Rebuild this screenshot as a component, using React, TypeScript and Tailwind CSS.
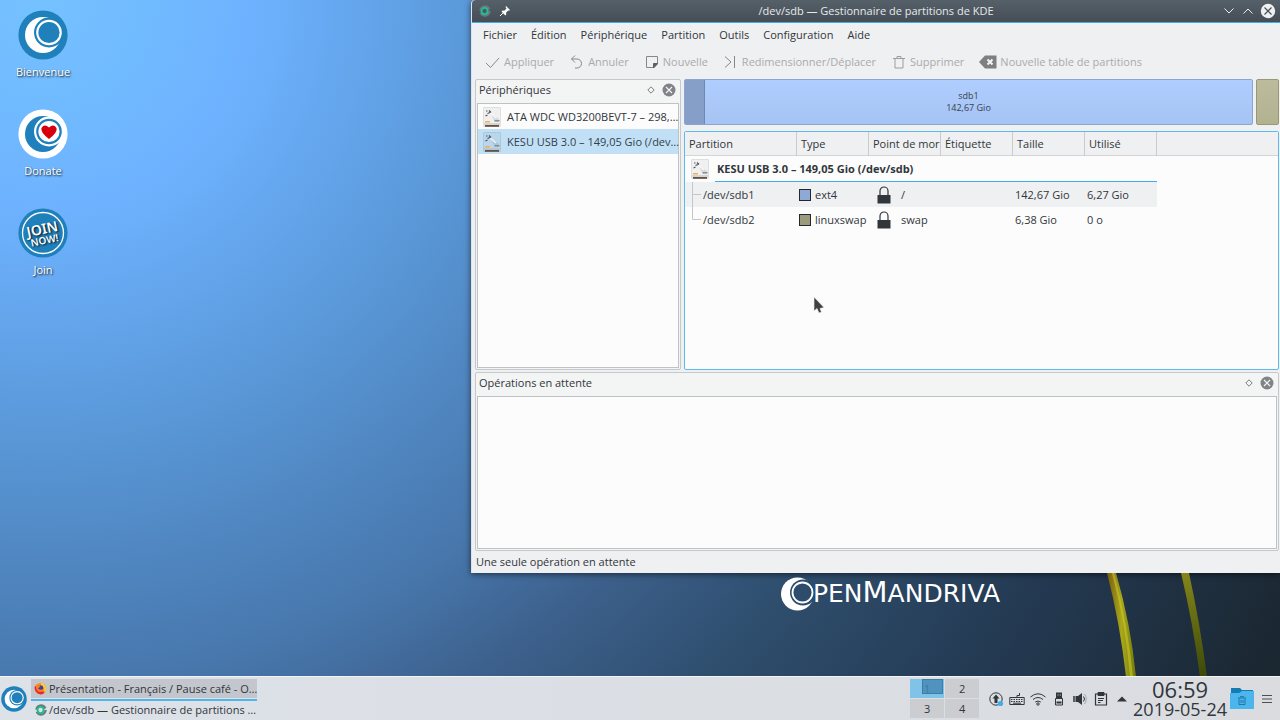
import type { ReactNode } from "react";

const menus = ["Fichier", "Édition", "Périphérique", "Partition", "Outils", "Configuration", "Aide"];

const devices = [
  { name: "ATA WDC WD3200BEVT-7 – 298,…", selected: false },
  { name: "KESU USB 3.0 – 149,05 Gio (/dev…", selected: true },
];

const columns = ["Partition", "Type", "Point de mor", "Étiquette", "Taille", "Utilisé"];

const partitions = [
  { path: "/dev/sdb1", type: "ext4", color: "bg-[#8ea9d6]", mount: "/", size: "142,67 Gio", used: "6,27 Gio" },
  { path: "/dev/sdb2", type: "linuxswap", color: "bg-[#9c9c7c]", mount: "swap", size: "6,38 Gio", used: "0 o" },
];

function Swirl({ bg, fg, children }: { bg: string; fg: string; children?: ReactNode }) {
  return (
    <svg viewBox="0 0 50 50" className="size-full" aria-hidden="true">
      <circle cx="25" cy="25" r="24.6" fill={bg} />
      <circle cx="25" cy="25" r="18" fill={fg} />
      <circle cx="31" cy="22.500" r="15" fill={bg} />
      <circle cx="31" cy="22.500" r="12.800" fill={fg} />
      <circle cx="31" cy="22.500" r="10.600" fill={bg} />
      {children}
    </svg>
  );
}

function JoinIcon() {
  return (
    <svg viewBox="0 0 50 50" className="size-full" aria-hidden="true">
      <circle cx="25" cy="25" r="24.600" fill="#1f80bb" />
      <circle cx="25" cy="25" r="20.500" fill="none" stroke="#fff" strokeWidth="1.300" />
      <g transform="rotate(-12 25 25)" fill="#fff" fontFamily="Noto Sans, sans-serif" fontWeight="600" textAnchor="middle">
        <text x="25" y="26" fontSize="14">JOIN</text>
        <text x="25" y="36" fontSize="10">NOW!</text>
      </g>
    </svg>
  );
}

function DriveIcon() {
  return (
    <svg viewBox="0 0 18 20" className="h-5 w-[18px] shrink-0" aria-hidden="true">
      <rect x="0.500" y="0.500" width="17" height="19" rx="0.500" fill="currentColor" fillOpacity="0.060" stroke="currentColor" strokeOpacity="0.120" />
      <path d="M7 6 16 12V15H12Z" fill="currentColor" fillOpacity="0.120" />
      <path d="M7 6 13 11" stroke="#fff" strokeWidth="1.500" opacity="0.800" />
      <path d="M3 4h1.500M6 3.500l2 2M4.500 6.500l2.500-1M2.500 9l2-1" stroke="#4c5156" strokeWidth="1.200" />
      <rect x="2" y="14" width="5" height="1.500" fill="#f4b04f" />
      <rect x="11.500" y="13" width="5" height="1.500" fill="#8b8f93" />
      <rect x="1" y="16.500" width="16" height="1" fill="#b4b8bb" />
      <rect x="2" y="18" width="14" height="1.800" fill="#66503f" />
    </svg>
  );
}

function LockIcon() {
  return (
    <svg viewBox="0 0 14 18" className="h-[18px] w-[14px] shrink-0" aria-hidden="true">
      <path d="M3 9V5a4 4 0 0 1 8 0v4" fill="none" stroke="#31363b" strokeWidth="1.200" />
      <rect x="0.500" y="9" width="13" height="8.500" fill="#31363b" />
    </svg>
  );
}

function AppIcon() {
  return (
    <svg viewBox="0 0 14 14" className="size-3 shrink-0" aria-hidden="true">
      <circle cx="7" cy="7" r="5.300" fill="none" stroke="#6d777e" strokeWidth="2.800" strokeDasharray="14 2.600" />
      <circle cx="6.500" cy="7" r="3.600" fill="none" stroke="#1fbf93" strokeWidth="2.200" />
    </svg>
  );
}

function DockHeader({ title }: { title: string }) {
  return (
    <div className="mb-1 flex h-[18px] shrink-0 items-center gap-[11px] pr-[3px] pl-[2px]">
      <h2 className="flex-1">{title}</h2>
      <button aria-label={`Détacher ${title}`}>
        <svg viewBox="0 0 8 8" className="size-2">
          <path d="M4 .8 7.200 4 4 7.200.8 4Z" fill="none" stroke="#7a7e81" />
        </svg>
      </button>
      <button aria-label={`Fermer ${title}`} className="-ml-1">
        <svg viewBox="0 0 14 14" className="size-[14px]">
          <circle cx="7" cy="7" r="6.500" fill="#808488" />
          <path d="M4 4l6 6M10 4l-6 6" stroke="#f3f4f4" strokeWidth="1.100" />
        </svg>
      </button>
    </div>
  );
}

function ToolButton({ label, wide, children }: { label: string; wide?: boolean; children: ReactNode }) {
  return (
    <button disabled className="flex items-center gap-[3px] px-[7px] text-[#a9abad]">
      <svg
        viewBox={wide ? "0 0 18 16" : "0 0 16 16"}
        className={wide ? "h-4 w-[18px]" : "size-4"}
        fill="none"
        stroke="#85888b"
        aria-hidden="true"
      >
        {children}
      </svg>
      {label}
    </button>
  );
}

function TitleBar() {
  return (
    <header className="flex h-[23px] shrink-0 items-center rounded-tl-sm border-b border-[#3daee9] bg-linear-to-b from-[#566069] to-[#454e56] text-[#e6e9eb]">
      <div className="flex w-14 items-center gap-2 pl-[7px]">
        <AppIcon />
        <svg viewBox="0 0 12 12" className="size-3" aria-hidden="true">
          <path d="M7 1l4 4-1 .7-.8-.3-2.200 2.300.3 1.800-1 1L2.500 6.500l1-1 1.800.3 2.200-2.200L6.500 2Z" fill="#fff" />
          <path d="M4.500 7.500 1 11" stroke="#fff" />
        </svg>
      </div>
      <h1 className="flex-1 text-center">/dev/sdb — Gestionnaire de partitions de KDE</h1>
      <div className="flex w-14 items-center justify-end gap-[9px] pr-1">
        <button aria-label="Réduire">
          <svg viewBox="0 0 10 6" className="h-[6px] w-[10px]"><path d="M.5.5 5 5 9.500.5" fill="none" stroke="#eff0f1" /></svg>
        </button>
        <button aria-label="Agrandir">
          <svg viewBox="0 0 10 6" className="h-[6px] w-[10px]"><path d="M.5 5.500 5 1 9.500 5.500" fill="none" stroke="#eff0f1" /></svg>
        </button>
        <button aria-label="Fermer" className="-ml-[2px]">
          <svg viewBox="0 0 16 16" className="size-4">
            <circle cx="8" cy="8" r="7.200" fill="#eff0f1" />
            <path d="M4.500 4.500l7 7M11.500 4.500l-7 7" stroke="#475057" strokeWidth="1.200" />
          </svg>
        </button>
      </div>
    </header>
  );
}

function Toolbar() {
  return (
    <div className="flex h-[29px] shrink-0 items-center gap-px pl-[6px] whitespace-nowrap" role="toolbar">
      <ToolButton label="Appliquer"><path d="M1 9l4.500 4.500L14 4" /></ToolButton>
      <ToolButton label="Annuler"><path d="M2.500 5H8a4.500 4.500 0 0 1 0 9H6M6 1.500 2.500 5 6 8.500" /></ToolButton>
      <ToolButton label="Nouvelle">
        <path d="M2.500 2.500h11v7.500l-3.500 3.500H2.500Z" />
        <path d="M13.500 9.500H9.500V14Z" fill="#5c6063" stroke="#5c6063" />
      </ToolButton>
      <ToolButton label="Redimensionner/Déplacer"><path d="M2 2.500 8 8l-6 5.500M11.500 2v12" /></ToolButton>
      <ToolButton label="Supprimer"><path d="M2 4.500h12M6 4V2.500h4V4M4 4.500v9.500h8V4.500" stroke="#9b9d9f" /></ToolButton>
      <ToolButton label="Nouvelle table de partitions" wide>
        <path d="M0 8l6-6.500h11.500v13H6Z" fill="#7d7f81" stroke="none" />
        <path d="M8.500 5.500l5 5M13.500 5.500l-5 5" stroke="#f5f5f5" strokeWidth="2" />
      </ToolButton>
    </div>
  );
}

function DevicesDock() {
  return (
    <section className="flex w-[206px] shrink-0 flex-col rounded-xs border border-[#c6c9cb] bg-[#f3f4f4] p-px">
      <DockHeader title="Périphériques" />
      <ul className="flex-1 border border-[#bfc2c4] bg-[#fcfcfc]">
        {devices.map((d) => (
          <li
            key={d.name}
            className={`flex h-[25px] items-center gap-[6px] pl-[5px] whitespace-nowrap ${d.selected ? "bg-[#c2e0f5] text-[#31404f]" : ""}`}
          >
            <DriveIcon />
            {d.name}
          </li>
        ))}
      </ul>
    </section>
  );
}

function PartitionBar() {
  return (
    <div className="flex h-[46px] shrink-0 gap-[3px]">
      <div className="flex flex-1 rounded-xs border border-[#8ba5d0] bg-linear-to-b from-[#b0cdff] to-[#a5c3f3]">
        <div className="w-5 border-r border-[#7088b0] bg-[#869fc9]" />
        <div className="-ml-5 flex flex-1 flex-col items-center justify-center text-[9px] leading-3 text-[#35404e]">
          <span>sdb1</span>
          <span>142,67 Gio</span>
        </div>
      </div>
      <div className="w-[23px] rounded-xs border border-[#97977a] bg-linear-to-b from-[#bcbc9d] to-[#b2b291]" />
    </div>
  );
}

function PartitionTable() {
  return (
    <div className="relative mt-[6px] min-h-0 flex-1 rounded-xs border border-[#5fb9ea] bg-[#fcfcfc]">
      <div className="h-6 border-b border-[#d3d5d6] bg-[#eff0f1]" />
      <table className="-mt-6 w-[472px] table-fixed border-separate border-spacing-0 text-left whitespace-nowrap">
        <colgroup>
          <col className="w-[112px]" />
          <col span={5} className="w-[72px]" />
        </colgroup>
        <thead>
          <tr className="h-6">
            {columns.map((c) => (
              <th key={c} scope="col" className="border-r border-[#c9cbcd] p-0 pl-1 font-normal">{c}</th>
            ))}
          </tr>
        </thead>
        <tbody>
          <tr className="h-[26px]">
            <th scope="rowgroup" colSpan={6} className="p-0 pl-[6px]">
              <div className="flex h-[26px]">
                <div className="flex w-6 items-center"><DriveIcon /></div>
                <div className="flex flex-1 flex-col font-bold">
                  <span className="flex flex-1 items-center pl-[2px]">KESU USB 3.0 – 149,05 Gio (/dev/sdb)</span>
                  <span className="h-px bg-[#3daee9]" />
                </div>
              </div>
            </th>
          </tr>
          {partitions.map((p, i) => (
            <tr key={p.path} className={`h-[25px] ${i === 0 ? "bg-[#eff0f1]" : ""}`}>
              <td className="p-0">
                <div className="flex h-[25px] items-center gap-[2px] pl-[7px]">
                  <svg viewBox="0 0 9 25" className="h-[25px] w-[9px]" aria-hidden="true">
                    <path d={i === 0 ? "M.5 0V25M.5 12.500H9" : "M.5 0V12.500H9"} fill="none" stroke="#c4c6c8" />
                  </svg>
                  {p.path}
                </div>
              </td>
              <td className="p-0">
                <div className="flex items-center gap-1 pl-[2px]">
                  <span className={`size-3 border border-[#23282d] ${p.color}`} />
                  {p.type}
                </div>
              </td>
              <td className="p-0">
                <div className="flex items-center gap-[10px] pl-2"><LockIcon />{p.mount}</div>
              </td>
              <td className="p-0" />
              <td className="p-0 pl-[2px]">{p.size}</td>
              <td className="p-0 pl-[2px]">{p.used}</td>
            </tr>
          ))}
        </tbody>
      </table>
      <svg viewBox="0 0 12 18" className="absolute top-[164px] left-32 h-[18px] w-3" aria-hidden="true">
        <path d="M1 1v14l3-2.500 2 4.500 2.500-1-1.500-3.500 4-1Z" fill="#3f4245" stroke="#f4f4f4" strokeWidth="0.600" />
      </svg>
    </div>
  );
}

function PartitionManager() {
  return (
    <div className="flex min-h-0 flex-1 flex-col rounded-tl-sm border-l border-[#dfe3e6] bg-[#eff0f1] shadow-[0_1px_6px_rgba(0,0,0,0.6)]">
      <TitleBar />
      <nav className="flex h-6 shrink-0 items-center pl-1">
        {menus.map((m) => (
          <button key={m} className="px-[7px]">{m}</button>
        ))}
      </nav>
      <Toolbar />
      <main className="flex min-h-0 flex-1 flex-col gap-[2px] pt-[3px] pr-px pl-[3px]">
        <div className="flex min-h-0 flex-[291] gap-[3px]">
          <DevicesDock />
          <div className="flex min-w-0 flex-1 flex-col">
            <PartitionBar />
            <PartitionTable />
          </div>
        </div>
        <section className="flex min-h-0 flex-[175] flex-col rounded-xs border border-[#c6c9cb] bg-[#f3f4f4] p-px">
          <DockHeader title="Opérations en attente" />
          <div className="flex-1 border border-[#bfc2c4] bg-[#fcfcfc]" />
        </section>
      </main>
      <footer className="flex h-[22px] shrink-0 items-center pl-1">Une seule opération en attente</footer>
    </div>
  );
}

function DesktopIcon({ label, children }: { label: string; children: ReactNode }) {
  return (
    <a
      href="#"
      className="flex h-[99px] w-[86px] flex-col items-center gap-1 text-white [text-shadow:1px_1px_2px_rgba(0,0,0,0.9)]"
    >
      <span className="size-[50px]">{children}</span>
      {label}
    </a>
  );
}

function WallpaperFoot() {
  return (
    <div className="flex h-[103px] shrink-0 items-start justify-between overflow-hidden pl-[309px]">
      <svg viewBox="0 0 236 40" className="h-10 w-[236px]" fill="#fff" fontFamily="DejaVu Sans, sans-serif">
        <mask id="crescent">
          <rect width="40" height="40" fill="#fff" />
          <circle cx="23" cy="19.500" r="13" fill="#000" />
        </mask>
        <circle cx="17.500" cy="21" r="16.500" mask="url(#crescent)" />
        <circle cx="22.500" cy="19.500" r="10" fill="none" stroke="#fff" strokeWidth="1.800" />
        <text x="33" y="29" fontSize="25">
          PEN<tspan fontSize="29">M</tspan>ANDRIVA
        </text>
      </svg>
      <svg viewBox="0 0 180 104" className="h-[104px] w-[180px] shrink-0" aria-hidden="true">
        <defs>
          <linearGradient id="stalk" x1="0" x2="1">
            <stop offset="0" stopColor="#7a5a10" />
            <stop offset="0.500" stopColor="#a9a81a" />
            <stop offset="1" stopColor="#747a0c" />
          </linearGradient>
          <linearGradient id="stalk-dark" x1="0" x2="0" y1="0" y2="1">
            <stop offset="0" stopColor="#85851a" />
            <stop offset="1" stopColor="#3c4a08" />
          </linearGradient>
        </defs>
        <path d="M7 0h9q15 52 20 104H26Q20 50 7 0Z" fill="url(#stalk)" />
        <path d="M12 0h2q14 52 19 104h-3Q26 52 12 0Z" fill="#c8c62c" opacity="0.600" />
        <path d="M81 0h8q11 50 18 104h-7Q93 50 81 0Z" fill="url(#stalk-dark)" />
      </svg>
    </div>
  );
}

function Taskbar() {
  return (
    <footer className="flex h-11 shrink-0 items-center border-t border-[#f2f4f6] bg-linear-to-r from-[#dde2e9] to-[#dadce0] pt-px">
      <button aria-label="Menu des applications" className="ml-px size-[26px] shrink-0">
        <Swirl bg="#1f80bb" fg="#fff" />
      </button>
      <div className="ml-1 flex w-[226px] flex-col self-start pt-px">
        <button className="flex h-[19px] items-center gap-[2px] bg-[#c3c7cd] pl-[3px] whitespace-nowrap">
          <svg viewBox="0 0 14 14" className="size-[13px] shrink-0" aria-hidden="true">
            <circle cx="7" cy="7.200" r="6.300" fill="#ff9418" />
            <path d="M1 4Q-.5 9 4 12.500 9 15 12 10.500L6 10Z" fill="#e5283f" />
            <path d="M8 .5q6 3 5 8.500-1 2-2 2.500 1-6-4-8Z" fill="#ffcb35" />
            <circle cx="7" cy="6.500" r="3" fill="#3b3fa5" />
            <path d="M2 4q2-2 5 .5L4.500 7Q7 9.500 10 7.500q-1 4-5 3Q2 8.500 2 4Z" fill="#ff7a22" />
          </svg>
          <span>Présentation - Français / Pause café - O…</span>
        </button>
        <div className="mt-px h-[2px] bg-[#53b4ea]" />
        <button className="flex h-[18px] items-center gap-[2px] pl-[3px] whitespace-nowrap">
          <span className="flex w-[13px] justify-center"><AppIcon /></span>
          <span>/dev/sdb — Gestionnaire de partitions …</span>
        </button>
      </div>
      <div className="ml-auto grid grid-cols-2 gap-px self-start pt-px">
        <button aria-label="Bureau 1" className="relative h-[19px] w-[34px] bg-[#7fc3e9] text-[#3a7ba5]">
          <span className="absolute top-0 right-px h-[15px] w-[21px] border border-[#3d7da6] bg-[#4f93be]" />
          <span className="relative">1</span>
        </button>
        <button className="h-[19px] w-[34px] bg-[#cbcdd1]">2</button>
        <button className="h-[19px] w-[34px] bg-[#cbcdd1]">3</button>
        <button className="h-[19px] w-[34px] bg-[#cbcdd1]">4</button>
      </div>
      <div className="ml-[9px] flex items-center gap-[5px]">
        <svg viewBox="0 0 16 16" className="size-4" aria-label="Mises à jour">
          <circle cx="8" cy="8" r="6.200" fill="none" stroke="#31363b" />
          <path d="M8 3.500 11.500 7.500H9.500V12h-3V7.500h-2Z" fill="#31363b" />
          <circle cx="12.500" cy="12.500" r="2.600" fill="#3daee9" />
        </svg>
        <svg viewBox="0 0 16 16" className="size-4" fill="none" stroke="#31363b" aria-label="Clavier">
          <path d="M8 6V4.500h2.500V2M.8 6.500h14.400v7H.8Z" />
          <path d="M2 8.500h12M2 10.500h12" strokeDasharray="1.500 1" strokeWidth="1.200" />
          <path d="M4 12.200h8" />
        </svg>
        <svg viewBox="0 0 16 16" className="size-4" fill="none" stroke="#31363b" aria-label="Réseau">
          <path d="M.5 6Q8-.5 15.500 6M3 8.500q5-4 10 0M5.200 11q2.800-2 5.600 0" />
          <circle cx="8" cy="13" r="1.200" />
        </svg>
        <svg viewBox="0 0 16 16" className="size-4" aria-label="Périphérique USB">
          <path d="M5 1.500h6V7H5Z" fill="#31363b" />
          <path d="M6.500 3.500h1v1h-1ZM8.800 3.500h1v1h-1Z" fill="#dadce0" />
          <path d="M4.500 7.500h7v6.500h-7Z" fill="none" stroke="#31363b" />
          <path d="M5.500 11.500h5" stroke="#31363b" strokeWidth="2" />
        </svg>
        <svg viewBox="0 0 16 16" className="size-4" aria-label="Volume">
          <path d="M2 5v6" stroke="#31363b" strokeWidth="1.500" />
          <path d="M3.500 5H6l4-3v12l-4-3H3.500Z" fill="#31363b" />
          <path d="M11.500 5.500q2 2.500 0 5" fill="none" stroke="#31363b" />
          <path d="M12.500 3q3.500 5 0 10" fill="none" stroke="#a4a8ab" />
        </svg>
        <svg viewBox="0 0 16 16" className="size-4" fill="none" stroke="#31363b" aria-label="Presse-papiers">
          <path d="M2.500 3h11v11h-11Z" strokeWidth="1.200" />
          <path d="M5 1.500h6v3H5Z" fill="#31363b" />
          <path d="M5 7.500h6M5 9.500h5M5 11.500h2.500" />
        </svg>
        <button aria-label="Afficher les icônes cachées">
          <svg viewBox="0 0 16 16" className="size-4"><path d="M3 10.500 8 5.500l5 5Z" fill="#31363b" /></svg>
        </button>
      </div>
      <time className="ml-[3px] flex flex-col items-center text-[#31363b]">
        <span className="text-[22px] leading-5">06:59</span>
        <span className="text-[18px] leading-5">2019-05-24</span>
      </time>
      <button aria-label="Corbeille" className="ml-[3px]">
        <svg viewBox="0 0 24 22" className="h-[22px] w-6">
          <path d="M1 0h9l2 2h11v6H1Z" fill="#147cb3" />
          <path d="M0 5h9l3-2h12v18H0Z" fill="#4bb5ee" />
          <path d="M8 10h8M10.500 9.500V8.500h3v1M9 10.500v6h6v-6M11 12v3M13 12v3" fill="none" stroke="#1f6f9f" strokeWidth="0.900" />
        </svg>
      </button>
      <button aria-label="Options du tableau de bord" className="mr-2 ml-2">
        <svg viewBox="0 0 10 10" className="size-[10px]"><path d="M0 1.500h10M0 5h10M0 8.500h10" stroke="#4b5055" /></svg>
      </button>
    </footer>
  );
}

export default function App() {
  return (
    <div className="flex h-screen flex-col overflow-hidden bg-[radial-gradient(circle_at_40px_0px,#76c1ff_0px,#70baff_110px,#6eb2ff_210px,#5997d7_440px,#4776ab_690px,#3d618d_800px,#2e4d6c_960px,#243a53_1150px,#1b2731_1400px)] font-['Open_Sans','Noto_Sans',sans-serif] text-[11px] leading-4 text-[#31363b]">
      <div className="flex min-h-0 flex-1">
        <aside className="w-[471px] shrink-0 pt-[10px]">
          <DesktopIcon label="Bienvenue">
            <Swirl bg="#1f80bb" fg="#fff" />
          </DesktopIcon>
          <DesktopIcon label="Donate">
            <Swirl bg="#fff" fg="#1f80bb">
              <path d="M31 30Q22 23 23.500 19 26.500 14.500 31 18.500 35.500 14.500 38.500 19 40 23 31 30Z" fill="#d9000d" />
            </Swirl>
          </DesktopIcon>
          <DesktopIcon label="Join">
            <JoinIcon />
          </DesktopIcon>
        </aside>
        <div className="flex min-w-0 flex-1 flex-col">
          <PartitionManager />
          <WallpaperFoot />
        </div>
      </div>
      <Taskbar />
    </div>
  );
}
